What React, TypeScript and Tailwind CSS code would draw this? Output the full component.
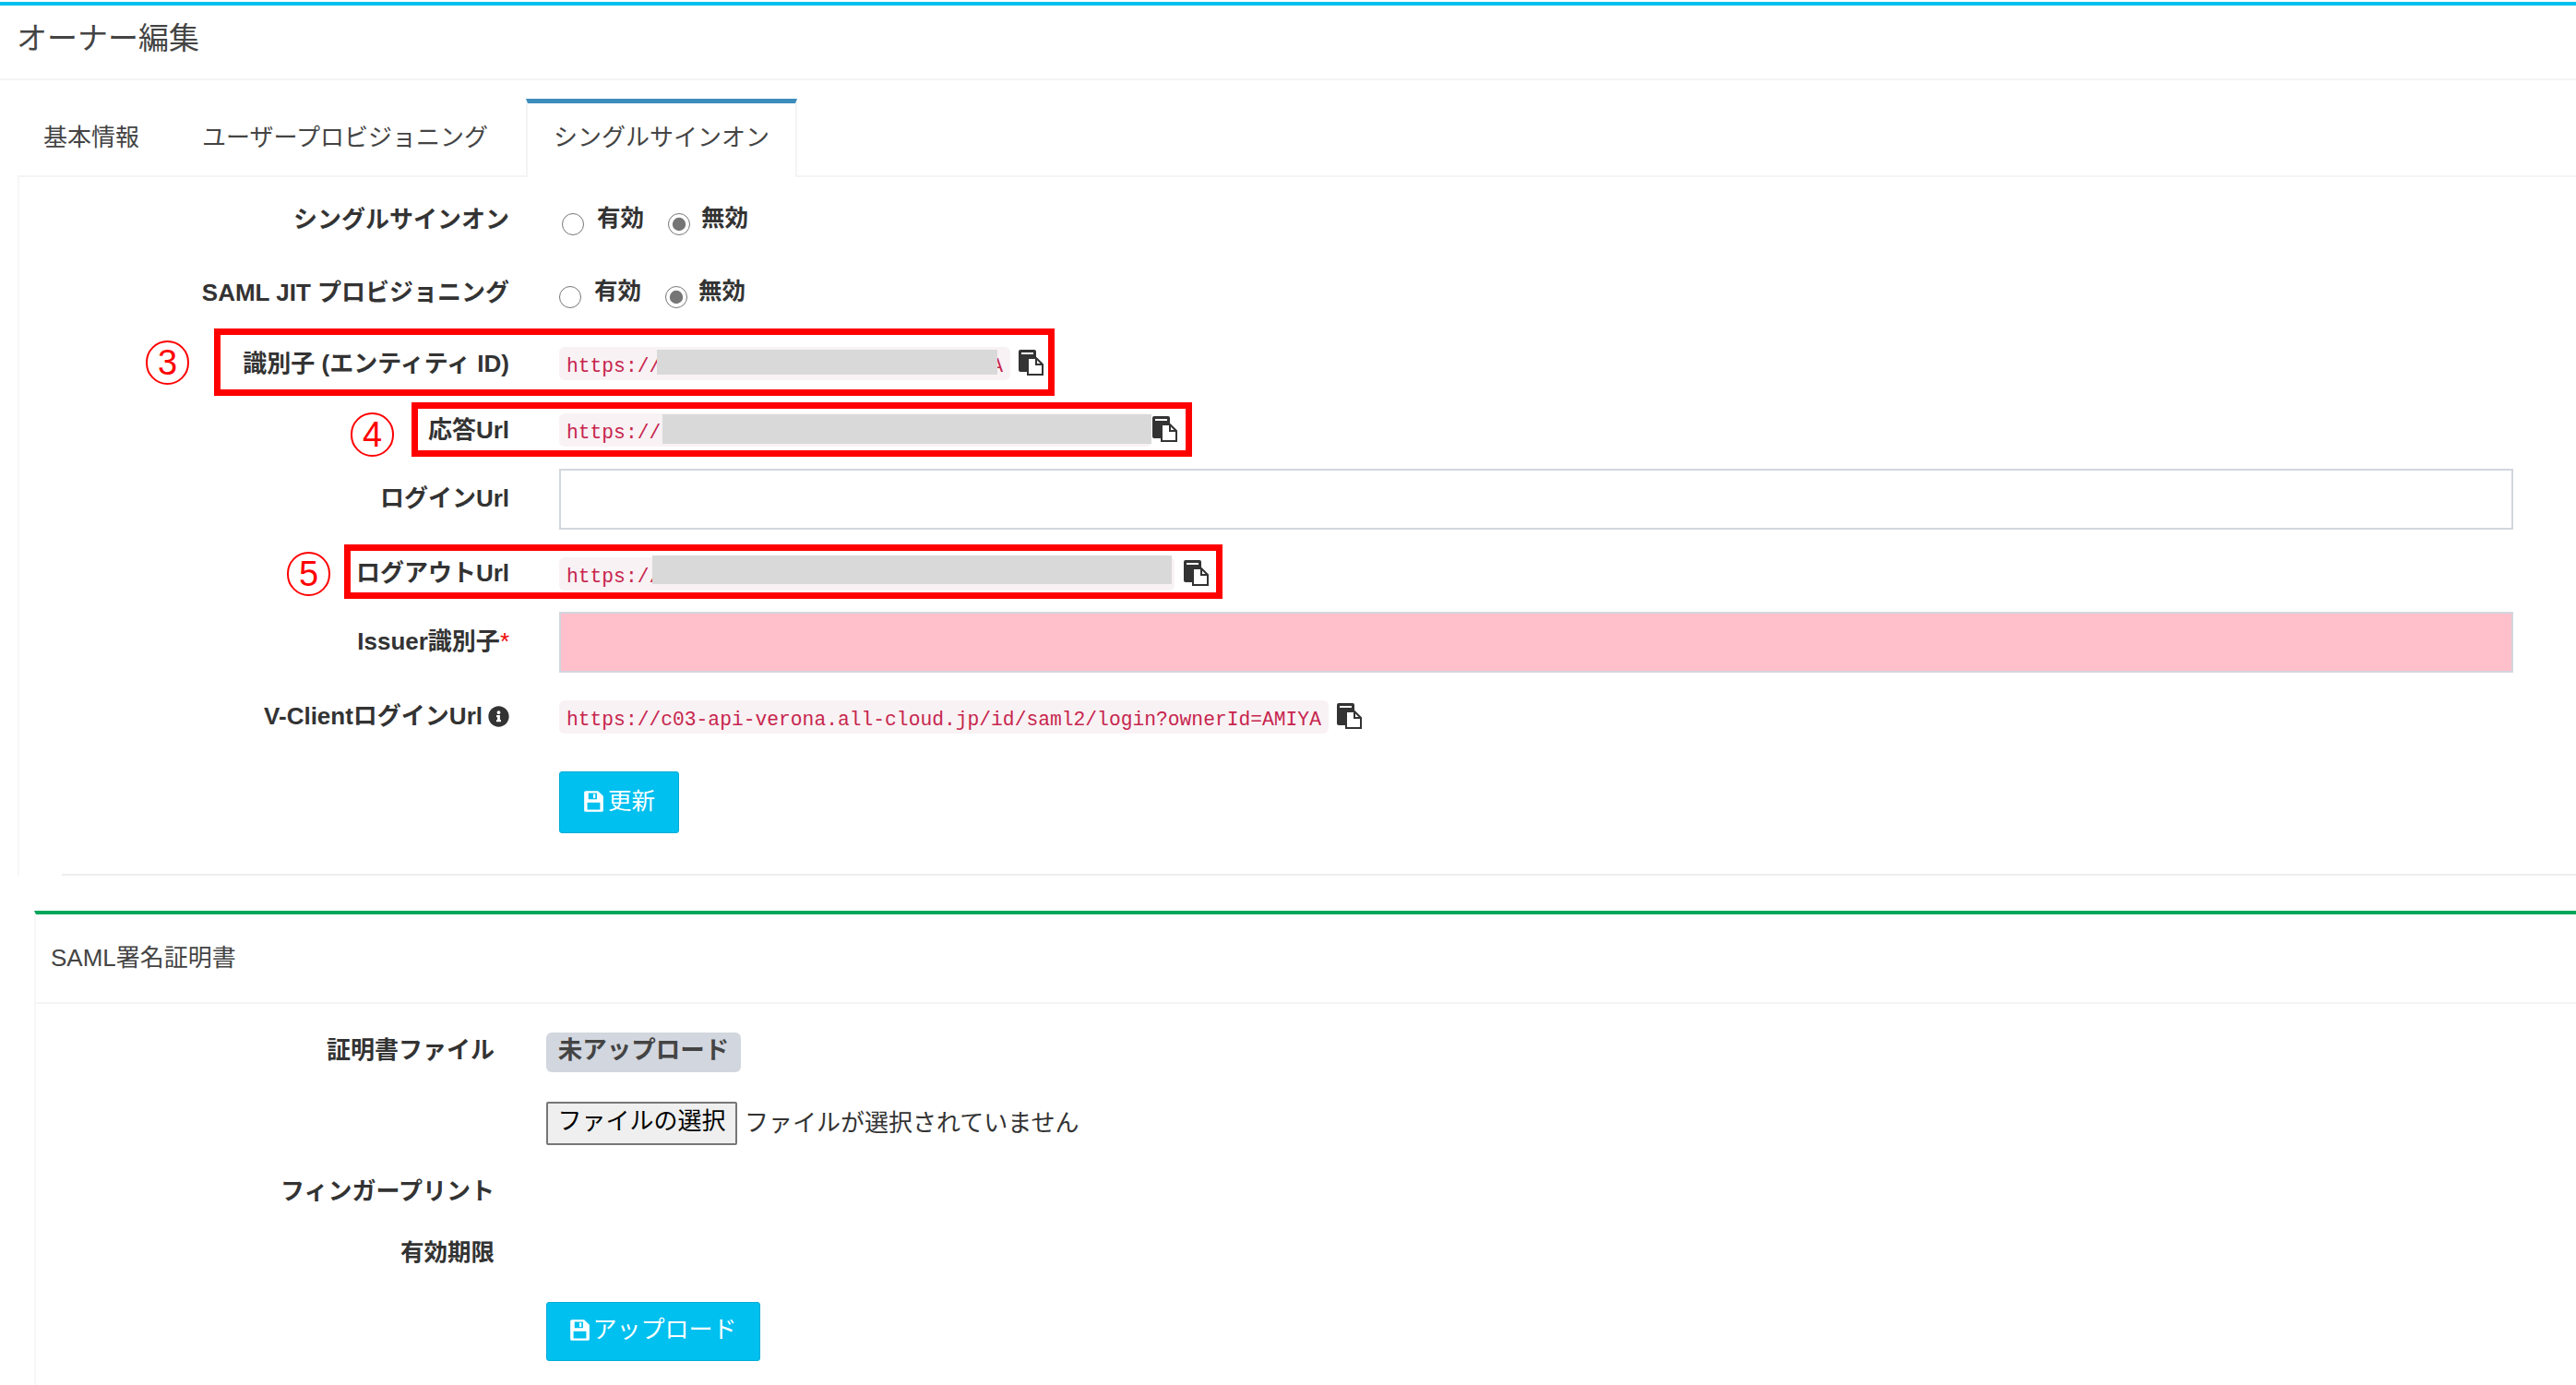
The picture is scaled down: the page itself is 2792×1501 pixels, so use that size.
import React from 'react';
import { FaInfoCircle } from 'react-icons/fa';

function CopyIcon() {
  return (
    <svg viewBox="0 0 28 29" className="w-[28px] h-[29px] shrink-0 mt-[2px]">
      <path d="M1 3a2 2 0 0 1 2-2h15a2 2 0 0 1 2 2v20a2 2 0 0 1-2 2H3a2 2 0 0 1-2-2z" fill="#333" />
      <rect x="4" y="4" width="13" height="2" fill="#fff" />
      <path d="M11 10h9l7 7v11H11z" fill="#fff" stroke="#333" strokeWidth="2" />
      <path d="M20 10v7h7" fill="none" stroke="#333" strokeWidth="2" />
    </svg>
  );
}

function SaveIcon() {
  return (
    <svg viewBox="0 0 20 22" preserveAspectRatio="none" className="w-[23px] h-[25px] shrink-0">
      <path
        fillRule="evenodd"
        fill="#fff"
        d="M1 2.5A1.5 1.5 0 0 1 2.500 1H14l5 5v13.500a1.500 1.500 0 0 1-1.500 1.500h-15A1.500 1.500 0 0 1 1 19.500zM5 3v6h8V3zM4 12v7h12v-7z"
      />
      <rect x="9.500" y="4" width="2" height="4" fill="#fff" />
    </svg>
  );
}

function Circled({ n, className }: { n: string; className: string }) {
  return (
    <span className={`absolute w-[47px] h-[48px] rounded-full border-2 border-[#ff0000] flex items-center justify-center text-[38px] leading-none text-[#ff0000] ${className}`}>
      {n}
    </span>
  );
}

function Label({ children, className }: { children: React.ReactNode; className?: string }) {
  return <div className={`w-[531px] shrink-0 text-right font-bold text-[26px] leading-none text-[#333] ${className ?? ''}`}>{children}</div>;
}

function Radios({ shift }: { shift: boolean }) {
  return (
    <div className={`flex items-center text-[25.5px] font-bold text-[#333] ${shift ? 'ml-0' : 'ml-[3px]'}`}>
      <input type="radio" name={shift ? 'jit-a' : 'sso-a'} className="w-[24px] h-[24px] m-0 mt-[10px] accent-[#757575]" />
      <span className="ml-[14px] w-[77px] leading-none pb-[2px]">有効</span>
      <input type="radio" name={shift ? 'jit-b' : 'sso-b'} defaultChecked className="w-[24px] h-[24px] m-0 mt-[10px] accent-[#757575]" />
      <span className="ml-[12px] leading-none pb-[2px]">無効</span>
    </div>
  );
}

function MaskedCode({ className, tail, maskClass }: { className: string; tail?: string; maskClass: string }) {
  return (
    <code className={`relative flex justify-between items-center h-[36px] px-[8px] pt-[7px] bg-[#f9f2f4] text-[#c7254e] rounded-[6px] text-[21.3px] font-['Liberation_Mono',monospace] ${className}`}>
      <span>https://</span>
      <span>{tail}</span>
      <span className={`absolute bg-[#d9d9d9] ${maskClass}`} />
    </code>
  );
}

export default function App() {
  return (
    <div className="relative min-h-[1501px] bg-white overflow-hidden font-['Liberation_Sans','Noto_Sans_CJK_JP',sans-serif]">
      <div className="h-[4px] mt-[2px] bg-[#00c0ef]" />
      <div className="h-[81px] flex items-center pl-[18px] pb-[8px] border-b-2 border-[#f4f4f4] text-[33px] text-[#444]">オーナー編集</div>

      {/* tabs */}
      <div className="ml-[19px] mt-[20px] h-[85px] flex items-stretch border-b-2 border-[#f4f4f4] text-[26px] text-[#444]">
        <div className="pl-[28px] w-[200px] shrink-0 pt-[23px]">基本情報</div>
        <div className="pt-[23px] w-[351px] shrink-0">ユーザープロビジョニング</div>
        <div className="w-[294px] -mb-[2px] border-t-[5px] border-x-2 border-t-[#3c8dbc] border-x-[#f4f4f4] bg-white pl-[28px] pt-[18px]">シングルサインオン</div>
      </div>

      {/* form */}
      <div className="ml-[19px] border-l-2 border-[#f7f7f7] flex flex-col">
        <div className="flex items-center h-[48px] mt-[22px]">
          <Label>シングルサインオン</Label>
          <div className="ml-[54px]"><Radios shift={false} /></div>
        </div>
        <div className="flex items-center h-[48px] mt-[31px]">
          <Label>SAML JIT プロビジョニング</Label>
          <div className="ml-[54px]"><Radios shift={true} /></div>
        </div>
        <div className="flex items-center h-[40px] mt-[33px]">
          <Label>識別子 (エンティティ ID)</Label>
          <div className="ml-[54px] flex items-start gap-[8px]">
            <MaskedCode className="w-[489px]" tail="A" maskClass="left-[106px] top-[3px] w-[369px] h-[27px]" />
            <CopyIcon />
          </div>
        </div>
        <div className="flex items-center h-[40px] mt-[32px]">
          <Label>応答Url</Label>
          <div className="ml-[54px] flex items-start">
            <MaskedCode className="w-[642px]" maskClass="left-[112px] top-[1px] w-[530px] h-[32px]" />
            <CopyIcon />
          </div>
        </div>
        <div className="flex items-center h-[66px] mt-[22px]">
          <Label className="pb-[3px]">ログインUrl</Label>
          <input className="ml-[54px] w-[2118px] h-[66px] border-2 border-[#d2d6de] bg-white" />
        </div>
        <div className="flex items-center h-[40px] mt-[28px]">
          <Label className="pb-[2px]">ログアウトUrl</Label>
          <div className="ml-[54px] flex items-start gap-[9px]">
            <MaskedCode className="w-[667px]" maskClass="left-[101px] top-[-2px] w-[563px] h-[31px]" />
            <CopyIcon />
          </div>
        </div>
        <div className="flex items-center h-[66px] mt-[21px]">
          <Label className="pb-[3px]">Issuer識別子<span className="text-[#f00000] font-normal">*</span></Label>
          <input className="ml-[54px] w-[2118px] h-[66px] border-2 border-[#d2d6de] bg-[#ffc0cb]" />
        </div>
        <div className="flex items-center h-[40px] mt-[28px]">
          <div className="w-[531px] shrink-0 flex justify-end items-center gap-[6px] pb-[2px] font-bold text-[26px] leading-none text-[#333]">
            V-ClientログインUrl <FaInfoCircle className="w-[23px] h-[23px] text-[#333]" />
          </div>
          <div className="ml-[54px] flex items-start gap-[8px]">
            <code className="flex items-center h-[36px] px-[8px] pt-[7px] bg-[#f9f2f4] text-[#c7254e] rounded-[6px] text-[21.3px] font-['Liberation_Mono',monospace]">
              https://c03-api-verona.all-cloud.jp/id/saml2/login?ownerId=AMIYA
            </code>
            <CopyIcon />
          </div>
        </div>
        <div className="ml-[585px] mt-[39px]">
          <button className="w-[130px] h-[67px] pb-[3px] bg-[#00c0ef] border border-[#00acd6] rounded-[3px] text-white text-[25.5px] flex items-center justify-center gap-[4px]">
            <SaveIcon />更新
          </button>
        </div>
        <div className="ml-[46px] mt-[44px] h-[2px] bg-[#eeeeee]" />
      </div>

      {/* certificate box */}
      <div className="ml-[37px] mt-[38px] pb-[40px] border-t-[4px] border-[#00a65a] border-l-2 border-l-[#f7f7f7]">
        <div className="h-[97px] flex items-center pl-[16px] border-b-2 border-[#f4f4f4] text-[26px] text-[#444]">SAML署名証明書</div>
        <div className="flex items-center h-[43px] mt-[31px]">
          <div className="w-[497px] shrink-0 text-right font-bold text-[26px] leading-none text-[#333] pb-[5px]">証明書ファイル</div>
          <span className="ml-[56px] w-[211px] h-[43px] pb-[3px] flex items-center justify-center bg-[#d2d6de] rounded-[6px] text-[26.5px] font-bold text-[#444]">未アップロード</span>
        </div>
        <div className="flex items-center ml-[553px] mt-[32px] h-[47px] text-[26px] text-[#333]">
          <button className="w-[207px] h-[47px] bg-[#efefef] border-2 border-[#767676] rounded-[2px] text-black text-[26px] leading-none pb-[5px]">ファイルの選択</button>
          <span className="ml-[8px]">ファイルが選択されていません</span>
        </div>
        <div className="flex items-center h-[30px] mt-[35px]">
          <div className="w-[497px] shrink-0 text-right font-bold text-[26px] leading-none text-[#333]">フィンガープリント</div>
        </div>
        <div className="flex items-center h-[30px] mt-[37px]">
          <div className="w-[497px] shrink-0 text-right font-bold text-[25.5px] leading-none text-[#333]">有効期限</div>
        </div>
        <div className="ml-[553px] mt-[38px]">
          <button className="w-[232px] h-[64px] pb-[4px] bg-[#00c0ef] border border-[#00acd6] rounded-[3px] text-white text-[26px] flex items-center justify-center gap-[2px]">
            <SaveIcon />アップロード
          </button>
        </div>
      </div>

      {/* annotations */}
      <div className="absolute left-[232px] top-[356px] w-[911px] h-[73px] border-[7px] border-[#ff0000]" />
      <div className="absolute left-[446px] top-[436px] w-[846px] h-[59px] border-[7px] border-[#ff0000]" />
      <div className="absolute left-[373px] top-[590px] w-[952px] h-[59px] border-[7px] border-[#ff0000]" />
      <Circled n="3" className="left-[158px] top-[369px]" />
      <Circled n="4" className="left-[380px] top-[447px]" />
      <Circled n="5" className="left-[311px] top-[598px]" />
    </div>
  );
}
